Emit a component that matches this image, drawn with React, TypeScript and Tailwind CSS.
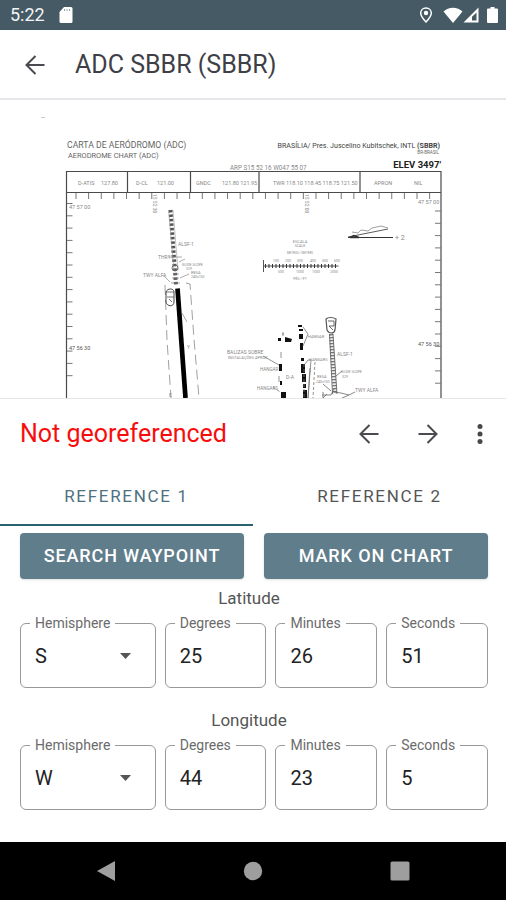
import { useState } from 'react'

const topTicks = Array.from({ length: 29 }, (_, i) => 76 + i * 12.63)
const leftTicks = Array.from({ length: 15 }, (_, i) => 103.5 + i * 12.3)
const rightTicks = Array.from({ length: 15 }, (_, i) => 111 + i * 12.3)

function StatusBar() {
  return (
    <div className="flex h-[30px] items-center bg-[#455a64] pr-2 pl-[10px] text-white">
      <span className="text-lg leading-6 text-gray-100">5:22</span>
      <svg className="ml-[14px] h-4 w-[14px]" viewBox="0 0 14 16">
        <path d="M5 0h7a1.500 1.500 0 0 1 1.500 1.500v13A1.500 1.500 0 0 1 12 16H2A1.500 1.500 0 0 1 .5 14.500V5z" fill="#fff" />
        <path d="M5.500 2v2M8 2v2M10.500 2v2" stroke="#90a4ae" strokeWidth="1" />
      </svg>

      <div className="ml-auto flex items-center">
        <svg className="mr-[10px] h-4 w-[14px]" viewBox="0 0 14 16" fill="none" stroke="#fff">
          <path d="M7 1C3.900 1 1.700 3.300 1.700 6.100 1.700 9.600 7 15 7 15s5.300-5.400 5.300-8.900C12.300 3.300 10.100 1 7 1z" strokeWidth="1.500" />
          <circle cx="7" cy="6" r="2.200" fill="#fff" stroke="none" />
        </svg>
        <svg className="h-4 w-5" viewBox="0 0 20 16" fill="#fff">
          <path d="M10 16 .5 4.500C3 2.200 6.300.7 10 .7s7 1.500 9.500 3.800z" />
        </svg>
        <svg className="mr-2 h-4 w-4" viewBox="0 0 16 16">
          <path d="M15.500.5v15H.5z" fill="#fff" />
          <path d="M13.500 5.500v8h-4.500v-3.700z" fill="#455a64" />
        </svg>
        <svg className="h-4 w-[11px]" viewBox="0 0 11 16" fill="#fff">
          <path d="M3.500 0h4v1.500H10a1 1 0 0 1 1 1V15a1 1 0 0 1-1 1H1a1 1 0 0 1-1-1V2.500a1 1 0 0 1 1-1h2.500z" />
        </svg>
      </div>
    </div>
  )
}

function ArrowIcon({ flip }: { flip?: boolean }) {
  return (
    <svg
      className={flip ? 'size-5 rotate-180' : 'size-5'}
      viewBox="0 0 20 20"
      fill="none"
      stroke="#4a4a50"
      strokeWidth="2"
    >
      <path d="M19.500 10H2M10.500 1 1.500 10l9 9" />
    </svg>
  )
}

function AerodromeChart() {
  return (
    <svg
      className="block h-auto w-full"
      viewBox="0 0 506 298"
      fontFamily="Roboto, sans-serif"
      fill="#888"
      fontSize="5"
    >
      <path d="M41 17.500h4" stroke="#ccc" />
      <g fill="#666">
        <text x="67" y="48" fontSize="8.700">CARTA DE AERÓDROMO (ADC)</text>
        <text x="68" y="58" fontSize="7.400">AERODROME CHART (ADC)</text>
        <text x="440" y="48" fontSize="7.100" textAnchor="end" fill="#444">
          BRASÍLIA/ Pres. Juscelino Kubitschek, INTL <tspan fontWeight="700">(SBBR)</tspan>
        </text>
        <text x="439" y="54" fontSize="4.500" textAnchor="end">BR-BRASIL</text>
        <text x="441" y="68" fontSize="9.500" fontWeight="700" textAnchor="end" fill="#222">ELEV 3497'</text>
        <text x="230" y="70" fontSize="6.300" fill="#888">ARP S15 52 16 W047 55 07</text>
      </g>

      <g fontSize="5.500">
        <text x="78" y="85">D-ATIS</text>
        <text x="101" y="85">127.80</text>
        <text x="136" y="85">D-CL</text>
        <text x="157" y="85">121.00</text>
        <text x="196" y="85">GNDC</text>
        <text x="222" y="85">121.80 121.95</text>
        <text x="273" y="85">TWR 118.10 118.45 118.75 121.50</text>
        <text x="374" y="85">APRON</text>
        <text x="414" y="85">NIL</text>
      </g>

      <g fill="none" stroke="#4a4a4a" strokeWidth="1.200">
        <path d="M66.500 298V71.500H441V298M66.500 92.500H441" />
        <path d="M127.500 71.500v21M190.500 71.500v21M259 71.500v21M360 71.500v21" />
      </g>

      <g stroke="#777" strokeWidth="1">
        {topTicks.map((x) => (
          <path key={x} d={`M${x} 93v6`} />
        ))}
        {leftTicks.map((y) => (
          <path key={y} d={`M67 ${y}h5.500`} />
        ))}
        {rightTicks.map((y) => (
          <path key={y} d={`M435 ${y}h6`} />
        ))}
      </g>

      <text x="69" y="109" fontSize="5.500">47 57 00</text>
      <text x="418" y="104" fontSize="5.500">47 57 00</text>
      <text x="69" y="250" fontSize="5.500" fill="#555">47 56 30</text>
      <text x="418" y="246" fontSize="5.500" fill="#555">47 56 30</text>
      <text transform="translate(153 94) rotate(90)">15 52 30</text>
      <text transform="translate(305 94) rotate(90)">15 52 00</text>

      {/* runway 11L */}
      <g fill="none">
        <path d="M170.500 110 176 185" stroke="#555" strokeWidth="4" strokeDasharray="2.500 2" />
        <path d="M168.500 110 174 170M173 110l5 60" stroke="#999" strokeWidth=".6" />
        <path d="M177.500 188.500 185.500 298" stroke="#000" strokeWidth="4.700" />
        <path d="M165 185l2 55 4 58M186 183l4 1 4 55 5 59" stroke="#888" strokeWidth=".8" strokeDasharray="10 5" />
        <path d="M168 157h14M170 182l-6-6M179 162l6-3M180 178l9-4M182 213l5 9" stroke="#888" strokeWidth=".7" />
        <path d="M166 192c1-4 8-4 8 0v10c0 5-7 5-8 0z" stroke="#444" strokeWidth="1" />
        <path d="M166 192h8M167 197h7M169 199l3 3" stroke="#555" strokeWidth=".8" />
        <circle cx="175" cy="168" r="3" stroke="#666" strokeWidth=".9" />
        <path d="M172 178h7M171 183h9M173 174h6" stroke="#888" strokeWidth=".7" />
      </g>
      <text x="178" y="146">ALSF-1</text>
      <text x="158" y="159">THR11</text>
      <text x="143" y="177">TWY ALFA</text>
      <text x="182" y="166" fontSize="3.500">GLIDE SLOPE</text>
      <text x="186" y="170" fontSize="3.500">329</text>
      <text x="191" y="174" fontSize="4">RESA</text>
      <text x="191" y="178" fontSize="3.500">240x150</text>
      <text x="187" y="249">Y</text>
      <text x="169" y="297">E</text>

      {/* magnetic variation */}
      <g stroke="#333" fill="none">
        <path d="M348 137.500h45" strokeWidth="1.200" />
        <path d="M348 137l40-8" strokeWidth=".8" />
        <path d="M350 137.500h9l-5-2z" strokeWidth="1.500" />
        <path d="M352 132l6 1 3-3 7 1 4-3 9-2 7 2" stroke="#888" strokeWidth=".8" />
      </g>
      <text x="395" y="140" fontSize="7">+ 2</text>

      {/* scale */}
      <text x="300" y="143" fontSize="4" textAnchor="middle">ESCALA</text>
      <text x="300" y="147" fontSize="3.500" textAnchor="middle">SCALE</text>
      <text x="300" y="154" fontSize="3" textAnchor="middle">METROS / METERS</text>
      <path d="M263.500 160v12M263.500 166h75" stroke="#555" fill="none" />
      <path d="M265 166h73" stroke="#333" strokeWidth="4" strokeDasharray="1 2.500" />
      <g fontSize="3.500">
        <text x="273" y="162">100</text>
        <text x="285" y="162">200</text>
        <text x="297" y="162">300</text>
        <text x="310" y="162">400</text>
        <text x="322" y="162">500</text>
        <text x="334" y="162">600</text>
        <text x="278" y="173">500</text>
        <text x="296" y="173">1000</text>
        <text x="312" y="173">1500</text>
        <text x="330" y="173">2000</text>
        <text x="300" y="180" textAnchor="middle">PÉS / FT</text>
      </g>

      {/* taxiways and apron */}
      <g fill="#111">
        <path d="M298 225h4v2h-4zM299 229h4v2h-4zM299 234h4v5h-4zM300 243h3v7h-3zM301 258h3v3h-3zM301 264h4v9h-4zM302 274h4v8h-4zM303 284h3v4h-3zM303 290h4v8h-4z" />
        <path d="M278 238h3v3h-3zM285 237l7 2-1 3h-6zM279 264h3v7h-3zM280 281h2v4h-2zM281 292h5v6h-5z" />
      </g>
      <g stroke="#777" strokeWidth=".8" fill="none">
        <path d="M283 232v4M284 234h-2M281 252v6M263 256l16 9M279 276v6M303 227l5 7-5 12M305 264l3-4h3l-3 38M308 298l2-30" />
        <path d="M273 287l7 5M304 264v34M315 262l-2 36" strokeDasharray="3 2" />
      </g>
      <text x="227" y="254">BALIZAS SOBRE</text>
      <text x="228" y="259" fontSize="4">INSTALAÇÕES APROX</text>
      <text x="260" y="271" fontSize="4.500">HANGAR</text>
      <text x="257" y="290" fontSize="4.500">HANGARS</text>
      <text x="286" y="279">D-A</text>
      <text x="308" y="238" fontSize="4">HANGAR</text>
      <text x="309" y="261" fontSize="4">HANGARS</text>

      {/* runway 11R */}
      <g fill="none" stroke="#555">
        <path d="M326 219c2-2 7-2 10 0l-1 11c-1 4-6 4-8 0z" strokeWidth="1.200" />
        <path d="M328 221h6v5h-5l4 4" strokeWidth=".9" />
        <path d="M331 234l4 60" strokeWidth="4" stroke="#777" strokeDasharray="1.500 1.500" />
        <path d="M329.500 234l3 60M333 234l4 60" strokeWidth=".8" />
        <path d="M322 295h9l3-6M334 292l7 1 8 2-7 3M349 295l6-3M323 284l8 7M336 276l6-5M323 292v6l4-4" strokeWidth=".7" />
      </g>
      <text x="337" y="256">ALSF-1</text>
      <text x="341" y="273" fontSize="3.500">GLIDE SLOPE</text>
      <text x="342" y="278" fontSize="3.500">329</text>
      <text x="317" y="278" fontSize="4">RESA</text>
      <text x="316" y="283" fontSize="3.500">240x150</text>
      <text x="355" y="292" fontSize="5">TWY ALFA</text>
    </svg>
  )
}

type FieldProps = {
  id: string
  label: string
  value: string
  options?: string[]
}

function Field({ id, label, value, options }: FieldProps) {
  const [current, setCurrent] = useState(value)

  return (
    <fieldset className="h-[74px] min-w-0 rounded-md border border-[#999]">
      <legend className="ml-[9px] px-[5px] text-sm leading-[18px] text-[#6b6b6b]">
        <label htmlFor={id}>{label}</label>
      </legend>

      {options ? (
        <div className="grid items-center">
          <select
            id={id}
            value={current}
            onChange={(e) => setCurrent(e.target.value)}
            className="col-start-1 row-start-1 h-12 w-full appearance-none bg-transparent pl-[14px] text-xl text-[#222] outline-none"
          >
            {options.map((option) => (
              <option key={option}>{option}</option>
            ))}
          </select>
          <svg
            className="pointer-events-none col-start-1 row-start-1 mr-6 h-[6px] w-[11px] justify-self-end"
            viewBox="0 0 11 6"
          >
            <path d="M0 0h11L5.500 6z" fill="#555" />
          </svg>
        </div>
      ) : (
        <input
          id={id}
          value={current}
          inputMode="numeric"
          onChange={(e) => setCurrent(e.target.value)}
          className="h-12 w-full bg-transparent pl-[14px] text-xl text-[#222] outline-none"
        />
      )}
    </fieldset>
  )
}

type CoordinateProps = {
  name: string
  hemispheres: string[]
  values: [string, string, string, string]
}

function Coordinate({ name, hemispheres, values }: CoordinateProps) {
  const id = name.toLowerCase()

  return (
    <section>
      <h2 className="mb-1 pr-[10px] text-center text-[17px] leading-6 text-[#555]">{name}</h2>
      <div className="grid grid-cols-[4fr_3fr_3fr_3fr] gap-[9px]">
        <Field id={`${id}-hemisphere`} label="Hemisphere" value={values[0]} options={hemispheres} />
        <Field id={`${id}-degrees`} label="Degrees" value={values[1]} />
        <Field id={`${id}-minutes`} label="Minutes" value={values[2]} />
        <Field id={`${id}-seconds`} label="Seconds" value={values[3]} />
      </div>
    </section>
  )
}

function ReferencePanel() {
  const [tab, setTab] = useState(0)

  return (
    <section className="border-t border-gray-200 bg-white">
      <div className="flex h-[70px] items-center pr-4 pl-5">
        <h2 className="flex-1 text-[25px] text-[#f80d0d]">Not georeferenced</h2>
        <button type="button" aria-label="Previous" className="mr-[39px]">
          <ArrowIcon />
        </button>
        <button type="button" aria-label="Next" className="mr-8">
          <ArrowIcon flip />
        </button>
        <button type="button" aria-label="More options">
          <svg className="size-5" viewBox="0 0 20 20" fill="#48484c">
            <circle cx="10" cy="2.500" r="2.500" />
            <circle cx="10" cy="10" r="2.500" />
            <circle cx="10" cy="17.500" r="2.500" />
          </svg>
        </button>
      </div>

      <div role="tablist" className="grid grid-cols-2">
        {['Reference 1', 'Reference 2'].map((label, i) => (
          <button
            key={label}
            type="button"
            role="tab"
            aria-selected={tab === i}
            onClick={() => setTab(i)}
            className={
              tab === i
                ? 'h-[57px] border-b-2 border-[#29616f] text-[17px] tracking-widest text-[#4f7080] uppercase'
                : 'h-[57px] border-b-2 border-transparent text-[17px] tracking-widest text-[#555] uppercase'
            }
          >
            {label}
          </button>
        ))}
      </div>

      <div className="pt-[7px] pr-[18px] pb-8 pl-5">
        <div className="mb-[7px] grid grid-cols-2 gap-5">
          <button
            type="button"
            className="h-[46px] rounded bg-[#607d8b] text-lg font-medium tracking-wider text-white uppercase shadow-sm"
          >
            Search waypoint
          </button>
          <button
            type="button"
            className="h-[46px] rounded bg-[#607d8b] text-lg font-medium tracking-wider text-white uppercase shadow-sm"
          >
            Mark on chart
          </button>
        </div>

        <div className="flex flex-col gap-5">
          <Coordinate name="Latitude" hemispheres={['N', 'S']} values={['S', '25', '26', '51']} />
          <Coordinate name="Longitude" hemispheres={['E', 'W']} values={['W', '44', '23', '5']} />
        </div>
      </div>
    </section>
  )
}

function NavigationBar() {
  return (
    <nav className="grid h-[58px] grid-cols-3 items-center justify-items-center bg-black px-8">
      <button type="button" aria-label="Back">
        <svg className="size-5" viewBox="0 0 20 20" fill="#9e9e9e">
          <path d="M19 0v20L1 10z" />
        </svg>
      </button>
      <button type="button" aria-label="Home">
        <svg className="size-5" viewBox="0 0 20 20" fill="#9e9e9e">
          <circle cx="10" cy="10" r="9.200" />
        </svg>
      </button>
      <button type="button" aria-label="Recent apps">
        <svg className="size-5" viewBox="0 0 20 20" fill="#9e9e9e">
          <rect x=".5" y=".5" width="19" height="19" rx="1.500" />
        </svg>
      </button>
    </nav>
  )
}

export default function App() {
  return (
    <main className="flex min-h-screen w-full flex-col bg-white font-[Roboto,sans-serif]">
      <StatusBar />

      <header className="flex h-[70px] items-center border-b-2 border-gray-200 px-[25px] pt-[2px]">
        <button type="button" aria-label="Navigate up" className="mr-[30px]">
          <ArrowIcon />
        </button>
        <h1 className="text-[25px] text-[#3f3f47]">ADC SBBR (SBBR)</h1>
      </header>

      <div className="flex-1 overflow-hidden">
        <AerodromeChart />
      </div>

      <ReferencePanel />
      <NavigationBar />
    </main>
  )
}
